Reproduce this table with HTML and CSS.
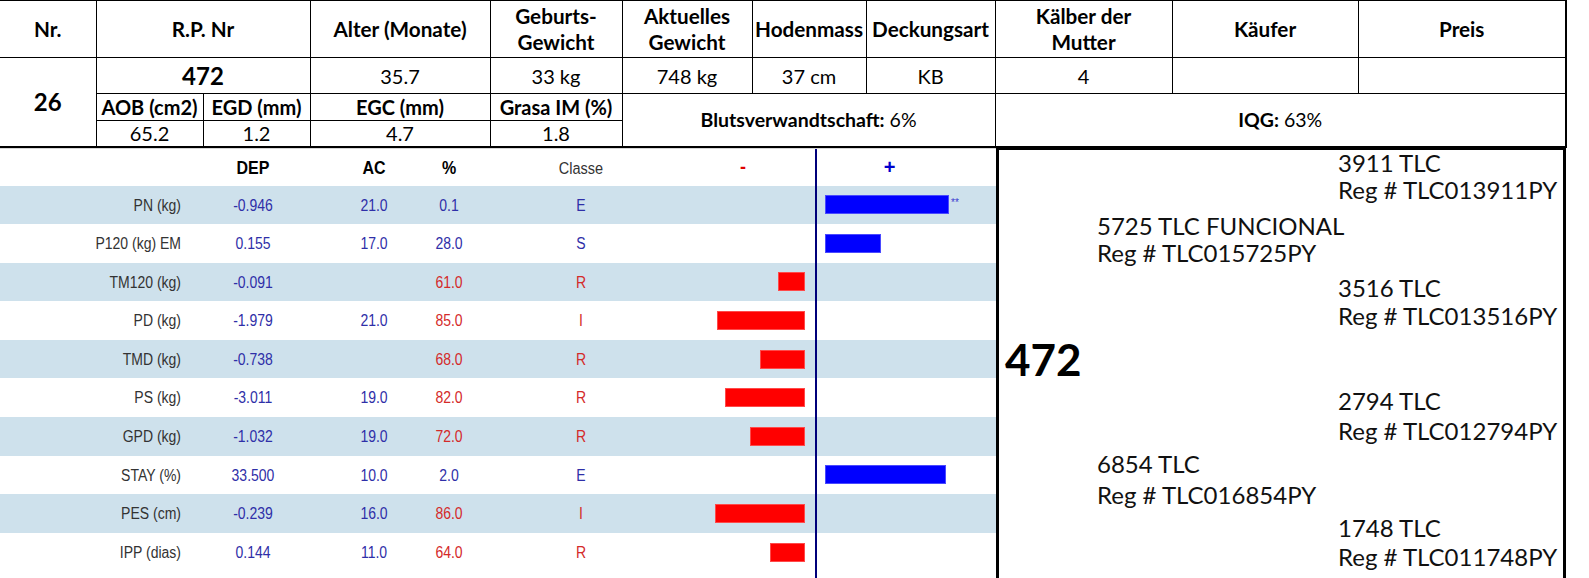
FILE: index.html
```html
<!DOCTYPE html>
<html lang="de">
<head>
<meta charset="utf-8">
<title>472</title>
<link rel="stylesheet" href="styles.css">
</head>
<body>
<table class="info">
  <colgroup>
    <col class="w-nr"><col class="w-rp1"><col class="w-rp2"><col class="w-alt"><col class="w-geb"><col class="w-akt"><col class="w-hod"><col class="w-dek"><col class="w-kal"><col class="w-kau"><col class="w-pre">
  </colgroup>
  <tr class="r-head">
    <th class="first">Nr.</th>
    <th colspan="2">R.P. Nr</th>
    <th>Alter (Monate)</th>
    <th>Geburts-<br>Gewicht</th>
    <th>Aktuelles<br>Gewicht</th>
    <th>Hodenmass</th>
    <th>Deckungsart</th>
    <th>Kälber der<br>Mutter</th>
    <th>Käufer</th>
    <th class="last">Preis</th>
  </tr>
  <tr class="r-data">
    <td rowspan="3" class="first nr bottom">26</td>
    <td colspan="2" class="rp">472</td>
    <td>35.7</td>
    <td>33 kg</td>
    <td>748 kg</td>
    <td>37 cm</td>
    <td>KB</td>
    <td>4</td>
    <td></td>
    <td class="last"></td>
  </tr>
  <tr class="r-sub">
    <th>AOB (cm2)</th>
    <th>EGD (mm)</th>
    <th>EGC (mm)</th>
    <th>Grasa IM (%)</th>
    <td colspan="3" rowspan="2" class="merged bottom"><b>Blutsverwandtschaft:</b> 6%</td>
    <td colspan="3" rowspan="2" class="merged bottom last"><b>IQG:</b> 63%</td>
  </tr>
  <tr class="r-val">
    <td class="bottom">65.2</td>
    <td class="bottom">1.2</td>
    <td class="bottom">4.7</td>
    <td class="bottom">1.8</td>
  </tr>
</table>

<div class="lower">
  <div class="chart">
    <div class="crow chead">
      <div class="c lbl"></div>
      <div class="c t dep">DEP</div>
      <div class="c t ac">AC</div>
      <div class="c t pct">%</div>
      <div class="c t cls">Classe</div>
      <div class="c neg"><span class="minus">-</span></div>
      <div class="c pos"><span class="plus">+</span></div>
    </div>

    <div class="crow alt">
      <div class="c t lbl">PN (kg)</div>
      <div class="c t dep">-0.946</div>
      <div class="c t ac">21.0</div>
      <div class="c t pct good">0.1</div>
      <div class="c t cls good">E</div>
      <div class="c neg"></div>
      <div class="c pos"><span class="bar blue" style="width:124px"></span><span class="stars">**</span></div>
    </div>

    <div class="crow">
      <div class="c t lbl">P120 (kg) EM</div>
      <div class="c t dep">0.155</div>
      <div class="c t ac">17.0</div>
      <div class="c t pct good">28.0</div>
      <div class="c t cls good">S</div>
      <div class="c neg"></div>
      <div class="c pos"><span class="bar blue" style="width:56px"></span></div>
    </div>

    <div class="crow alt">
      <div class="c t lbl">TM120 (kg)</div>
      <div class="c t dep">-0.091</div>
      <div class="c t ac"></div>
      <div class="c t pct bad">61.0</div>
      <div class="c t cls bad">R</div>
      <div class="c neg"><span class="bar red" style="width:27px"></span></div>
      <div class="c pos"></div>
    </div>

    <div class="crow">
      <div class="c t lbl">PD (kg)</div>
      <div class="c t dep">-1.979</div>
      <div class="c t ac">21.0</div>
      <div class="c t pct bad">85.0</div>
      <div class="c t cls bad">I</div>
      <div class="c neg"><span class="bar red" style="width:88px"></span></div>
      <div class="c pos"></div>
    </div>

    <div class="crow alt">
      <div class="c t lbl">TMD (kg)</div>
      <div class="c t dep">-0.738</div>
      <div class="c t ac"></div>
      <div class="c t pct bad">68.0</div>
      <div class="c t cls bad">R</div>
      <div class="c neg"><span class="bar red" style="width:45px"></span></div>
      <div class="c pos"></div>
    </div>

    <div class="crow">
      <div class="c t lbl">PS (kg)</div>
      <div class="c t dep">-3.011</div>
      <div class="c t ac">19.0</div>
      <div class="c t pct bad">82.0</div>
      <div class="c t cls bad">R</div>
      <div class="c neg"><span class="bar red" style="width:80px"></span></div>
      <div class="c pos"></div>
    </div>

    <div class="crow alt">
      <div class="c t lbl">GPD (kg)</div>
      <div class="c t dep">-1.032</div>
      <div class="c t ac">19.0</div>
      <div class="c t pct bad">72.0</div>
      <div class="c t cls bad">R</div>
      <div class="c neg"><span class="bar red" style="width:55px"></span></div>
      <div class="c pos"></div>
    </div>

    <div class="crow">
      <div class="c t lbl">STAY (%)</div>
      <div class="c t dep">33.500</div>
      <div class="c t ac">10.0</div>
      <div class="c t pct good">2.0</div>
      <div class="c t cls good">E</div>
      <div class="c neg"></div>
      <div class="c pos"><span class="bar blue" style="width:121px"></span></div>
    </div>

    <div class="crow alt">
      <div class="c t lbl">PES (cm)</div>
      <div class="c t dep">-0.239</div>
      <div class="c t ac">16.0</div>
      <div class="c t pct bad">86.0</div>
      <div class="c t cls bad">I</div>
      <div class="c neg"><span class="bar red" style="width:90px"></span></div>
      <div class="c pos"></div>
    </div>

    <div class="crow">
      <div class="c t lbl">IPP (dias)</div>
      <div class="c t dep">0.144</div>
      <div class="c t ac">11.0</div>
      <div class="c t pct bad">64.0</div>
      <div class="c t cls bad">R</div>
      <div class="c neg"><span class="bar red" style="width:35px"></span></div>
      <div class="c pos"></div>
    </div>

    <div class="crow tail">
      <div class="c lbl"></div>
      <div class="c dep"></div>
      <div class="c ac"></div>
      <div class="c pct"></div>
      <div class="c cls"></div>
      <div class="c neg"></div>
      <div class="c pos"></div>
    </div>
  </div>

  <div class="ped">
    <div class="blk b-ss col3"><div>3911 TLC</div><div>Reg # TLC013911PY</div></div>
    <div class="blk b-s col2"><div>5725 TLC FUNCIONAL</div><div>Reg # TLC015725PY</div></div>
    <div class="blk b-sd col3"><div>3516 TLC</div><div>Reg # TLC013516PY</div></div>
    <div class="subject">472</div>
    <div class="blk b-ds col3"><div>2794 TLC</div><div>Reg # TLC012794PY</div></div>
    <div class="blk b-d col2"><div>6854 TLC</div><div>Reg # TLC016854PY</div></div>
    <div class="blk b-dd col3"><div>1748 TLC</div><div>Reg # TLC011748PY</div></div>
  </div>
</div>
</body>
</html>
```

FILE: styles.css
```css
html, body {
  margin: 0;
  padding: 0;
  background: #fff;
}
body {
  width: 1589px;
  height: 578px;
  overflow: hidden;
  font-family: Lato, "Liberation Sans", sans-serif;
  color: #000;
}

/* ---------- top info table ---------- */
.info {
  border-collapse: collapse;
  table-layout: fixed;
  width: 1566px;
}
.w-nr  { width: 96px; }
.w-rp1 { width: 107px; }
.w-rp2 { width: 107px; }
.w-alt { width: 180px; }
.w-geb { width: 132px; }
.w-akt { width: 130px; }
.w-hod { width: 114px; }
.w-dek { width: 129px; }
.w-kal { width: 177px; }
.w-kau { width: 186px; }
.w-pre { width: 208px; }

.info th,
.info td {
  border: 1px solid #000;
  padding: 0;
  text-align: center;
  vertical-align: middle;
  white-space: nowrap;
  font-size: 20px;
  line-height: 26px;
  font-weight: 400;
}
.info th {
  font-weight: 700;
  font-size: 20.7px;
}
.info .first { border-left: none; }
.info .last { border-right: 2px solid #000; }
.info .bottom { border-bottom: 2px solid #000; }

.r-head { height: 57px; }
.r-data { height: 36px; }
.r-sub  { height: 27px; }
.r-val  { height: 26px; }

.r-sub th { font-size: 20px; line-height: 24px; }
.r-val td { line-height: 24px; }

.info .nr {
  font-weight: 700;
  font-size: 24px;
}
.info .rp {
  font-weight: 700;
  font-size: 24px;
}
.info .merged {
  font-size: 19.5px;
}
.info .merged b { font-weight: 700; }

/* ---------- lower area ---------- */
.lower {
  display: flex;
  height: 430px;
  overflow: hidden;
}

.chart {
  width: 996px;
  flex: none;
  display: flex;
  flex-direction: column;
  font-family: "Liberation Sans", Arial, sans-serif;
  border-top: 1px solid #d6d6d6;
}

.crow {
  display: grid;
  grid-template-columns: 193px 120px 122px 28px 236px 116px 181px;
  height: 38.6px;
  flex: none;
}
.crow.chead { height: 37px; }
.crow.tail { flex: 1; height: auto; }
.crow.alt { background: #cee1ec; }

.c {
  display: flex;
  align-items: center;
  justify-content: center;
  white-space: nowrap;
  font-size: 14px;
  color: #2f2fa8;
}
.c.t { transform: scaleY(1.17); }
.c.lbl {
  justify-content: flex-end;
  padding-right: 12px;
  color: #333;
}
.c.good { color: #2f2fa8; }
.c.bad  { color: #d42a2a; }

.chead .c {
  font-weight: 700;
  font-size: 16px;
  color: #000;
}
.chead .c.cls {
  font-weight: 400;
  font-size: 14.5px;
  color: #333;
}
.minus {
  color: #e00000;
  font-size: 18px;
  font-weight: 700;
}
.plus {
  color: #0000cc;
  font-size: 20px;
  font-weight: 700;
}
.chead .c.neg { padding-right: 28px; justify-content: center; }
.chead .c.pos { padding-right: 42px; justify-content: center; }

.c.neg {
  justify-content: flex-end;
  padding-right: 10px;
}
.c.pos {
  justify-content: flex-start;
  padding-left: 8px;
  border-left: 2px solid #00007a;
}

.bar {
  display: block;
  height: 19px;
  box-sizing: border-box;
}
.bar.blue {
  background: #0000ff;
  border: 1px solid #4a4aff;
}
.bar.red {
  background: #ff0000;
  border: 1px solid #ff4a4a;
}
.stars {
  font-size: 10px;
  color: #3a3ad0;
  margin-left: 2px;
  align-self: center;
  margin-top: -4px;
}

/* ---------- pedigree ---------- */
.ped {
  flex: none;
  width: 564px;
  border-left: 3px solid #000;
  border-right: 3px solid #000;
  border-top: 2px solid #000;
  font-family: Lato, "Liberation Sans", sans-serif;
  font-size: 24px;
  color: #111;
  display: flex;
  flex-direction: column;
}
.blk { line-height: 28px; }
.col2 { margin-left: 98px; }
.col3 { margin-left: 339px; }

.b-ss { margin-top: -1px; line-height: 27px; }
.b-s  { margin-top: 9px; line-height: 27px; }
.b-sd { margin-top: 8px; line-height: 28px; }
.subject {
  margin-top: 7px;
  margin-left: 6px;
  font-weight: 700;
  font-size: 44px;
  line-height: 44px;
  color: #000;
}
.b-ds { margin-top: 5px; line-height: 30px; }
.b-d  { margin-top: 2px; line-height: 31px; }
.b-dd { margin-top: 3px; line-height: 29px; }
```
